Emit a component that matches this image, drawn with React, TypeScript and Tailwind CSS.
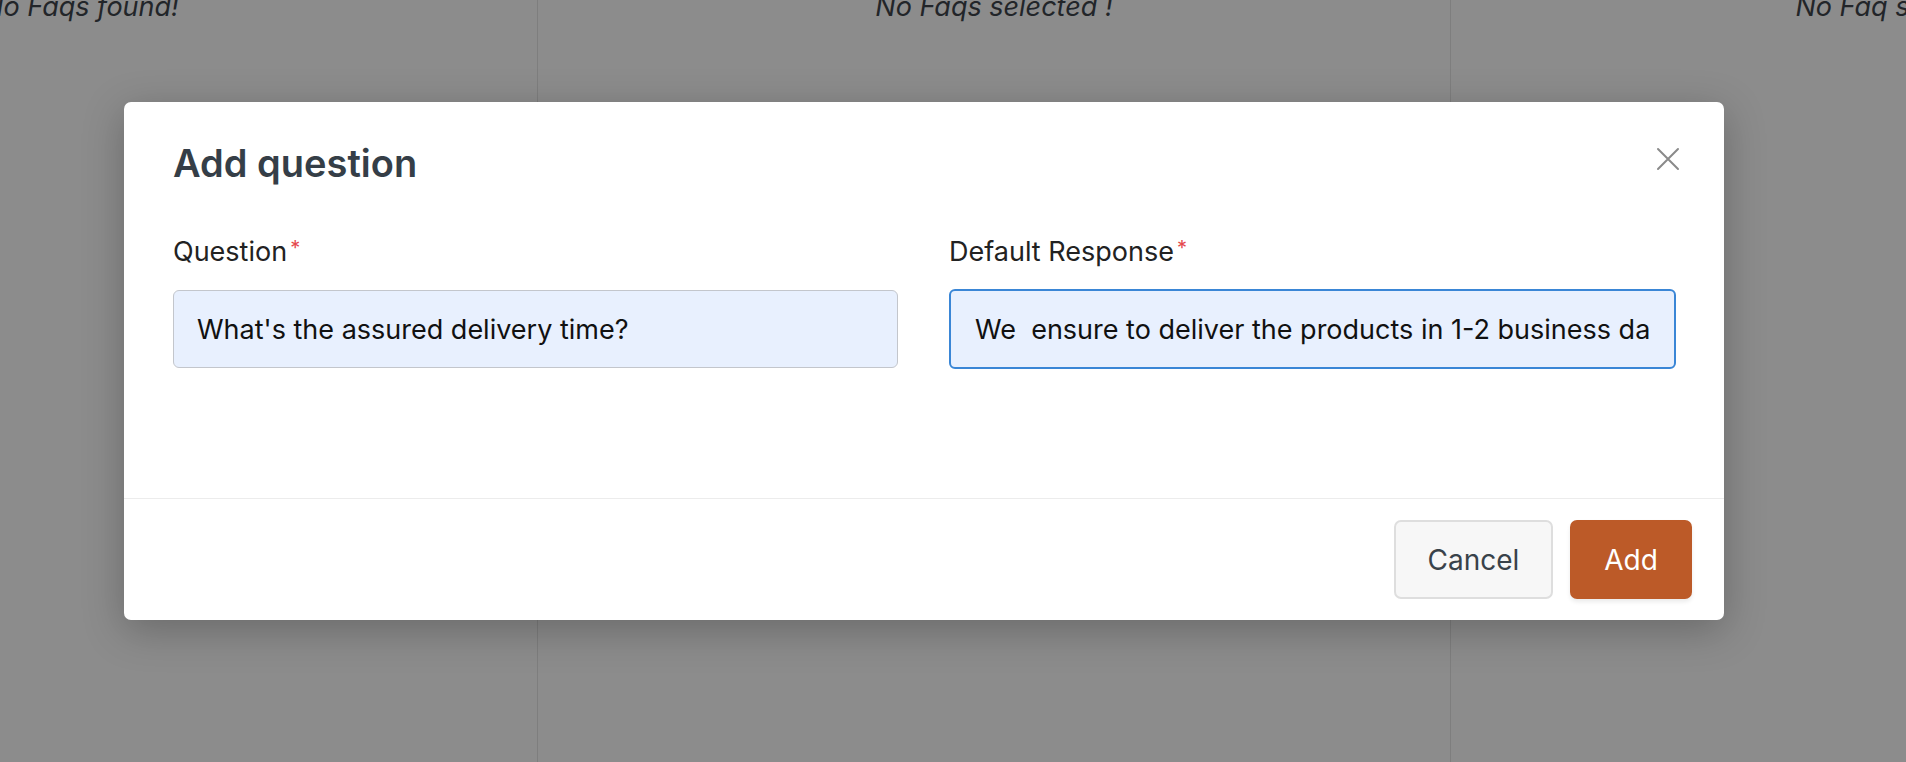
import React from "react";

const FONT = "font-['Inter','Noto_Sans',sans-serif]";

const BackgroundColumn = ({ text }: { text: string }) => (
  <div className="h-full w-[913px] shrink-0 border-r border-[#7e7e7e] text-center">
    <p className="-mt-[10px] text-[27px] leading-[34px] italic text-[#222529]">
      {text}
    </p>
  </div>
);

const Field = ({
  label,
  value,
  focused,
}: {
  label: string;
  value: string;
  focused?: boolean;
}) => (
  <div className={focused ? "flex w-[727px] flex-col" : "flex w-[725px] flex-col"}>
    <label className="text-[27px] leading-[36px] text-[#222222]">
      {label}
      <span className="ml-[3px] align-top text-[20px] leading-[28px] text-[#e5484d]">
        *
      </span>
    </label>
    <input
      readOnly
      value={value}
      className={
        focused
          ? "mt-[19px] h-[80px] w-full rounded-[6px] border-2 border-[#3a86d6] bg-[#e8f0fe] px-[24px] text-[27px] text-[#111111] outline-none"
          : "mt-[20px] h-[78px] w-full rounded-[6px] border border-[#c3c6cc] bg-[#e8f0fe] px-[23px] text-[27px] text-[#111111] outline-none"
      }
    />
  </div>
);

export default function App() {
  return (
    <div
      className={`${FONT} relative h-[762px] w-[1906px] overflow-hidden bg-[#8c8c8c]`}
    >
      {/* page behind the overlay, scrolled sideways */}
      <div className="-ml-[375px] flex h-full">
        <BackgroundColumn text="No Faqs found!" />
        <BackgroundColumn text="No Faqs selected !" />
        <BackgroundColumn text="No Faq selected !" />
      </div>

      {/* MODAL */}
      <div className="absolute inset-0">
        <div className="ml-[124px] mt-[102px] flex h-[518px] w-[1600px] flex-col rounded-[7px] bg-white shadow-[0_10px_40px_rgba(0,0,0,0.25)]">
          <div className="flex items-start justify-between pl-[49px] pr-[44px] pt-[37px]">
            <h2 className="text-[38px] font-semibold leading-[48px] text-[#353e47]">
              Add question
            </h2>
            <button className="mt-[8px] flex h-[24px] w-[24px] items-center justify-center text-[#8a8a8a]">
              <svg width="24" height="24" viewBox="0 0 24 24" fill="none">
                <path
                  d="M2 2L22 22M22 2L2 22"
                  stroke="currentColor"
                  strokeWidth="2"
                  strokeLinecap="round"
                />
              </svg>
            </button>
          </div>

          <div className="flex flex-1 gap-[51px] pl-[49px] pt-[47px]">
            <Field label="Question" value="What's the assured delivery time?" />
            <Field
              label="Default Response"
              value="We  ensure to deliver the products in 1-2 business days"
              focused
            />
          </div>

          <div className="flex h-[122px] items-center justify-end gap-[17px] border-t border-[#ececec] pr-[32px]">
            <button className="h-[79px] w-[159px] rounded-[7px] border-2 border-[#dedede] bg-[#f7f7f7] text-[28px] text-[#39424a]">
              Cancel
            </button>
            <button className="h-[79px] w-[122px] rounded-[7px] bg-[#bc5a28] text-[28px] text-white shadow-[0_3px_4px_rgba(0,0,0,0.08)]">
              Add
            </button>
          </div>
        </div>
      </div>
    </div>
  );
}
